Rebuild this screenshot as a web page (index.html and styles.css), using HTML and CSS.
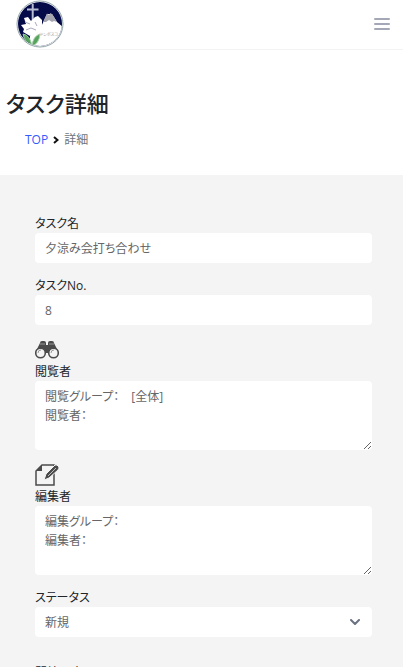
FILE: index.html
```
<!DOCTYPE html>
<html lang="ja">
<head>
  <meta charset="UTF-8">
  <meta name="viewport" content="width=device-width, initial-scale=1.0">
  <title>タスク詳細</title>
  <link rel="stylesheet" href="styles.css">
</head>
<body>
  <header class="header">
    <a href="#" class="logo" aria-label="ドンボスコ">
      <svg width="48" height="48" viewBox="0 0 48 48">
        <defs>
          <clipPath id="logoClip"><circle cx="24" cy="24" r="22"/></clipPath>
        </defs>
        <circle cx="24" cy="24" r="23" fill="#fff" stroke="#8fa3a5" stroke-width="1"/>
        <g clip-path="url(#logoClip)">
          <rect width="48" height="48" fill="#050a48"/>
          <path d="M14 36 L25 27 L31 14 L36 14 L41 22 L48 28 V48 H14 Z" fill="#fff"/>
          <path d="M27 22 L31 13.500 L33 15 L34.500 13 L36.500 14.500 L41 22 L38 21 L36 22 L33 20 L30 22 Z" fill="#a5a6ae"/>
          <path d="M15.700 4 H17.700 V8.500 H22.500 V10.500 H17.700 V22 H15.700 V10.500 H11 V8.500 H15.700 Z" fill="#b9bdd3"/>
          <path d="M8 18 L12 17 L15 21 L19 17 L22 16 L26 20 L26 26 L25 31 L20 34 L14 36 L7 32 L8 29 L5 25 L10 24 Z" fill="#fff"/>
          <path d="M9 22 L14 24 M19 22 L21 26 M10 30 L15 28 L20 30" fill="none" stroke="#a9abc0" stroke-width="1"/>
          <path d="M7 34 Q14 35 16 46 Q9 44 7 34 Z M24 34 Q17 36 16 46 Q23 44 24 34 Z" fill="#55a35c" stroke="#a8cdaa" stroke-width="1"/>
        </g>
        <text x="24" y="36" class="logo-text">ドンボスコ</text>
      </svg>
    </a>
    <button type="button" class="menu-button" aria-label="メニュー">
      <svg width="16" height="14" viewBox="0 0 16 14">
        <path d="M1 2 H15 M1 7 H15 M1 12 H15" stroke="#a3a7b6" stroke-width="2" stroke-linecap="round"/>
      </svg>
    </button>
  </header>

  <div class="page-title">
    <h1>タスク詳細</h1>
    <nav class="breadcrumb">
      <a href="#">TOP</a>
      <svg width="6" height="8" viewBox="0 0 6 8"><path d="M1 1 L4.500 4 L1 7" fill="none" stroke="#111" stroke-width="2"/></svg>
      <span>詳細</span>
    </nav>
  </div>

  <main class="content">
    <form>
      <div class="field">
        <label for="taskName">タスク名</label>
        <input type="text" id="taskName" value="夕涼み会打ち合わせ" readonly>
      </div>
      <div class="field">
        <label for="taskNo">タスクNo.</label>
        <input type="text" id="taskNo" value="8" readonly>
      </div>
      <div class="field">
        <svg class="field-icon" width="24" height="24" viewBox="0 0 24 24">
          <path d="M5 5 Q5 3 7 3 H9 Q11 3 11 5 V7 H13 V5 Q13 3 15 3 H17 Q19 3 19 5 L22 11 L20 14 H4 L2 11 Z" fill="#4b4b4b"/>
          <circle cx="5.500" cy="15" r="4.800" fill="#f4f4f4" stroke="#4b4b4b" stroke-width="1.600"/>
          <circle cx="18.500" cy="15" r="4.800" fill="#f4f4f4" stroke="#4b4b4b" stroke-width="1.600"/>
          <path d="M3 15 Q3 12 6 12 M16 15 Q16 12 19 12" fill="none" stroke="#999" stroke-width="1"/>
          <path d="M10 13 Q12 11 14 13 V15 H10 Z" fill="#4b4b4b"/>
          <path d="M5 6 H10 M14 6 H19" stroke="#999" stroke-width="1"/>
        </svg>
        <label for="viewers">閲覧者</label>
        <textarea id="viewers" readonly>閲覧グループ：　[全体]
閲覧者：</textarea>
      </div>
      <div class="field">
        <svg class="field-icon" width="24" height="24" viewBox="0 0 24 24">
          <path d="M7 2 H19 V22 H1 V8 Z" fill="#f4f4f4" stroke="#4b4b4b" stroke-width="1.500"/>
          <path d="M7 2 V8 H1 Z" fill="#4b4b4b"/>
          <path d="M9 17 L11 11 L20 2 Q22 1 24 4 Q24 6 23 7 L14 15 Z" fill="#4b4b4b" stroke="#f4f4f4" stroke-width="1"/>
          <path d="M13 13 L21 5" stroke="#bbb" stroke-width="1"/>
        </svg>
        <label for="editors">編集者</label>
        <textarea id="editors" readonly>編集グループ：
編集者：</textarea>
      </div>
      <div class="field">
        <label for="status">ステータス</label>
        <div class="select-box">
          <select id="status">
            <option>新規</option>
          </select>
          <svg class="select-arrow" width="10" height="6" viewBox="0 0 10 6"><path d="M1 1 L5 5 L9 1" fill="none" stroke="#6b7280" stroke-width="2" stroke-linecap="round" stroke-linejoin="round"/></svg>
        </div>
      </div>
      <div class="field field-date">
        <label for="startDate">開始予定</label>
        <input type="text" id="startDate" readonly>
      </div>
    </form>
  </main>
</body>
</html>
```
FILE: styles.css
```
* {
  box-sizing: border-box;
}
body {
  margin: 0;
  font-family: "Open Sans", "Noto Sans CJK JP", sans-serif;
  font-size: 12px;
  line-height: 19px;
  font-feature-settings: "palt";
  color: #212529;
  background-color: #fff;
}
/* ヘッダー */
.header {
  display: flex;
  justify-content: space-between;
  align-items: center;
  height: 50px;
  padding: 0 13px 2px 16px;
  border-bottom: 1px solid #f3f3f3;
}
.logo svg {
  display: block;
}
.logo-text {
  font-size: 4px;
  fill: #999;
}
.menu-button {
  display: flex;
  padding: 0;
  border: none;
  background: none;
  cursor: pointer;
}
/* タイトル */
.page-title {
  padding: 38px 6px 26px;
}
h1 {
  margin: 0;
  font-size: 22px;
  line-height: 30px;
  font-weight: 500;
}
.breadcrumb {
  display: flex;
  align-items: center;
  gap: 5px;
  margin-top: 12px;
  padding-left: 19px;
  color: #6c757d;
}
.breadcrumb a {
  color: #2f5bff;
  text-decoration: none;
}
/* 入力フォーム */
.content {
  padding: 39px 31px 39px 35px;
  background-color: #f4f4f4;
}
.field {
  margin-bottom: 13px;
}
.field-icon {
  display: block;
}
label {
  display: block;
}
input,
textarea,
select {
  display: block;
  width: 100%;
  height: 30px;
  padding: 5px 10px;
  border: none;
  border-radius: 4px;
  background-color: #fff;
  color: #666;
  font: inherit;
  font-feature-settings: inherit;
}
textarea {
  height: 69px;
  padding-top: 6px;
  resize: vertical;
}
.select-box {
  position: relative;
}
select {
  appearance: none;
}
.select-arrow {
  position: absolute;
  top: 12px;
  right: 12px;
  pointer-events: none;
}
.field-date {
  margin-top: 26px;
}
```
